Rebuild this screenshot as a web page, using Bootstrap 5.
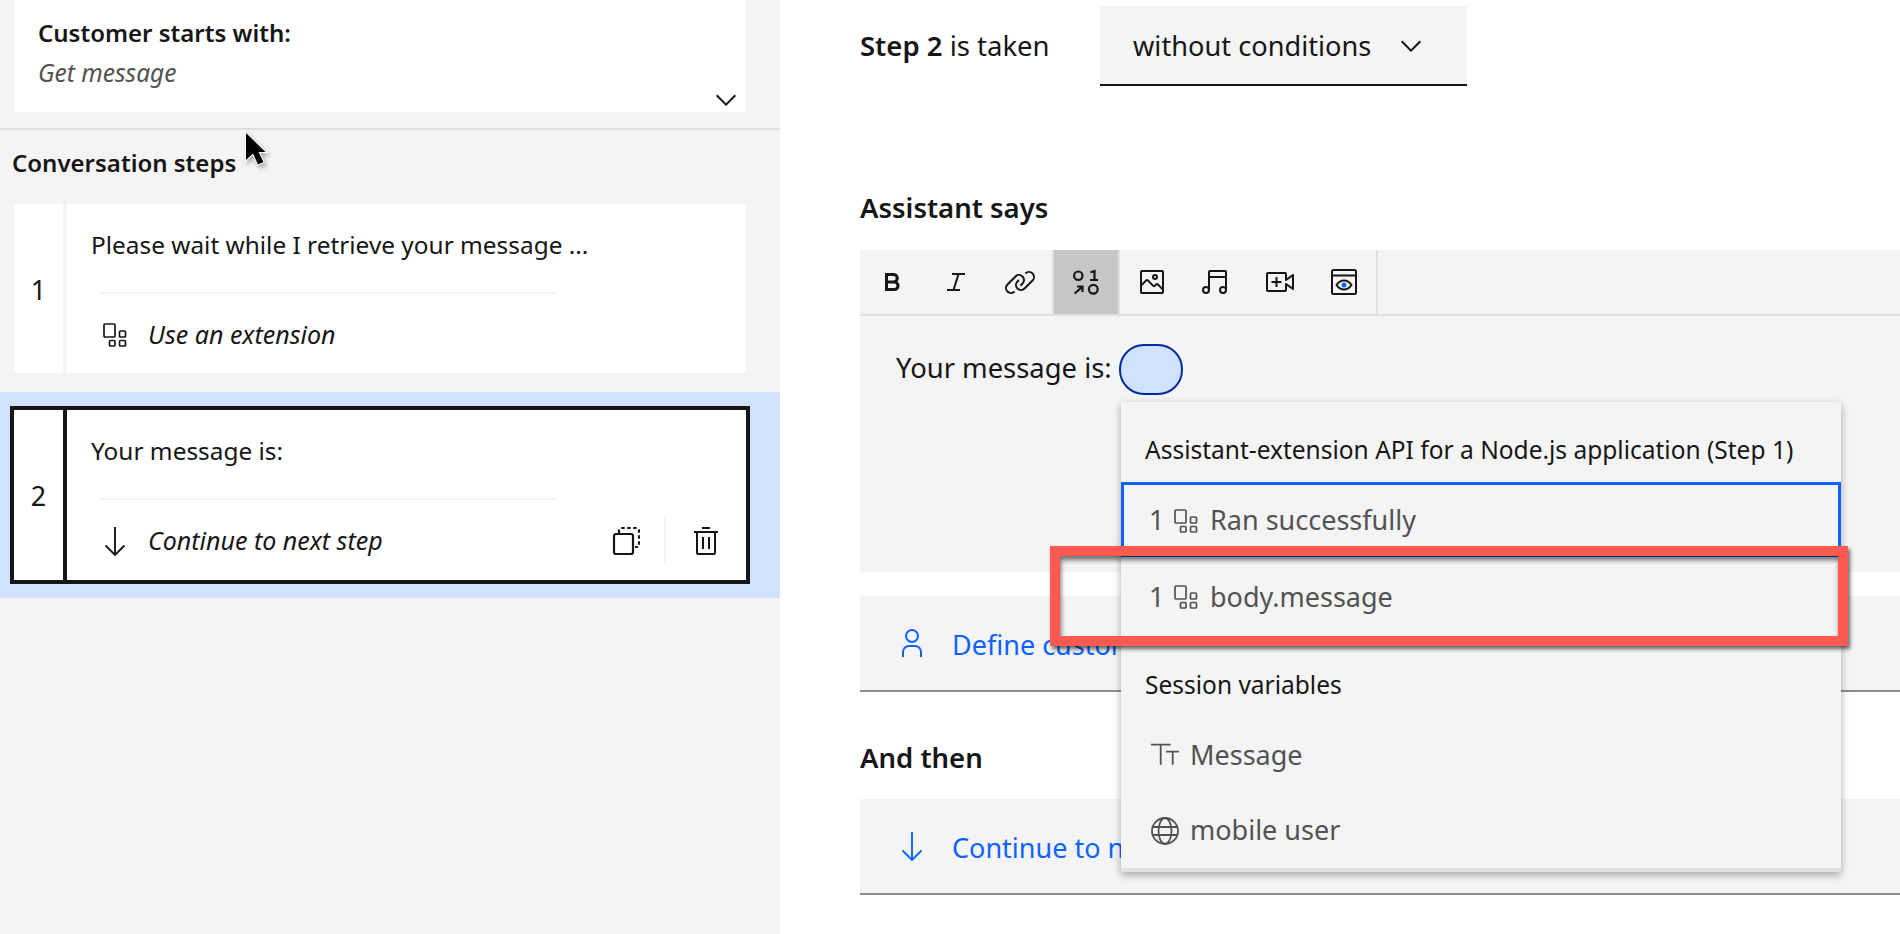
<!DOCTYPE html>
<html lang="en">
<head>
  <meta charset="UTF-8">
  <meta name="viewport" content="width=device-width, initial-scale=1.0">
  <title>Assistant actions</title>
  <link href="https://cdn.jsdelivr.net/npm/bootstrap@5.3.0/dist/css/bootstrap.min.css" rel="stylesheet">
  <style>
    body { font-family: "Noto Sans", "Open Sans", sans-serif; color: #161616; background: #fff; overflow: hidden; }
    svg { display: block; flex: none; }
    .app-shell { width: 1900px; height: 934px; overflow: hidden; }

    /* left pane */
    .side-pane { width: 780px; flex: none; background: #f4f4f4; }
    .start-box { height: 112px; margin: 0 34px 0 14px; background: #fff; padding: 19px 10px 6px 24px; }
    .start-title { font-size: 24px; line-height: 28px; font-weight: 600; }
    .start-sub { font-size: 24.500px; line-height: 28px; margin-top: 12px; color: #525252; font-style: italic; }
    .side-rule { height: 2px; margin-top: 16px; background: #e0e0e0; }
    .side-heading { height: 74px; padding: 19px 0 0 12px; font-size: 24px; line-height: 28px; font-weight: 600; margin: 0; }
    .step-box { height: 169px; margin: 0 34px 0 14px; background: #fff; }
    .step-num { width: 53px; flex: none; border-right: 4px solid #f4f4f4; padding-top: 3px; font-size: 27px; font-weight: 400; }
    .step-body { padding: 27px 24px 0 24px; }
    .step-text { font-size: 24.400px; line-height: 28px; }
    .step-rule { width: 457px; height: 2px; margin: 33px 0 17px 8px; background: #f4f4f4; }
    .step-foot { height: 48px; padding-left: 8px; font-size: 25px; font-style: italic; }
    .foot-icon { width: 32px; margin-right: 17px; }
    .step-selected { height: 206px; margin-top: 19px; padding: 14px 30px 14px 10px; background: #d0e2ff; }
    .step-selected .step-box { margin: 0; height: 178px; width: 740px; border: 4px solid #161616; }
    .step-selected .step-num { border-right-color: #161616; }
    .step-sep { width: 2px; height: 48px; background: #f4f4f4; margin: 0 24px; }

    /* right pane */
    .main-pane { padding-left: 80px; }
    .taken-row { height: 80px; margin-top: 6px; font-size: 27.500px; }
    .taken-label { width: 240px; }
    .cond-select { width: 367px; height: 80px; padding: 2px 0 0 33px; background: #f4f4f4; border-bottom: 2px solid #161616; font-size: 27.200px; }
    .cond-select svg { margin-left: 24px; }
    .block-title { font-size: 27.500px; line-height: 30px; font-weight: 600; margin: 0; }
    .says-title { margin-top: 107px; }
    .tool-strip { height: 66px; margin-top: 27px; background: #f4f4f4; border-bottom: 2px solid #e0e0e0; }
    .tool-btn { width: 64px; height: 64px; color: #161616; }
    .tool-on { background: #c6c6c6; }
    .tool-sep { width: 2px; height: 64px; background: #e0e0e0; }
    .editor-area { height: 256px; padding: 28px 0 0 36px; background: #f4f4f4; font-size: 27.400px; }
    .editor-text { margin-top: 3px; }
    .var-chip { width: 64px; height: 51px; margin-left: 7px; border-radius: 25px; border: 2px solid #002d9c; background: #d0e2ff; }
    .link-row { height: 96px; background: #f4f4f4; border-bottom: 2px solid #8d8d8d; padding-left: 36px; color: #0f62fe; font-size: 27px; }
    .link-row svg { margin-right: 24px; }
    .link-label { padding-top: 4px; white-space: nowrap; }
    .define-row { margin-top: 24px; }
    .then-title { margin-top: 51px; }
    .next-row { margin-top: 26px; }

    /* variable menu, sits over the editor */
    .var-menu { left: 1121px; top: 402px; width: 720px; height: 470px; background: #f4f4f4; box-shadow: 0 3px 8px rgba(0,0,0,.32); border-bottom: 4px solid #e0e0e0; z-index: 5; color: #525252; }
    .menu-head { padding-left: 24px; color: #161616; font-size: 24.500px; }
    .menu-top { height: 80px; padding-top: 16px; }
    .menu-row { padding-left: 28px; font-size: 27px; }
    .menu-row .row-num { width: 25px; }
    .menu-row .row-label { margin-left: 12px; }
    .menu-row .var-label { margin-left: 9px; }
    .menu-focus { height: 75px; border: 3px solid #0f62fe; padding-left: 25px; padding-top: 2px; }
    .red-mark { left: 1050px; top: 546px; width: 798px; height: 100px; border: 10px solid #ff5a4f; box-shadow: 2px 3px 4px rgba(0,0,0,.6), inset 1px 4px 5px rgba(0,0,0,.55); z-index: 6; }
    .mouse-arrow { left: 244px; top: 130px; filter: drop-shadow(2px 3px 2px rgba(0,0,0,.3)); z-index: 9; }
  </style>
</head>
<body>
  <svg width="0" height="0" class="position-absolute">
    <symbol id="ic-ext" viewBox="0 0 24 24"><g fill="none" stroke="currentColor" stroke-width="1.7"><rect x="1" y="1" width="11" height="13" rx="1"/><rect x="16.5" y="8" width="6" height="6" rx="1"/><rect x="6.5" y="17.5" width="5.5" height="5.5" rx="1"/><rect x="16.5" y="17.5" width="6" height="5.5" rx="1"/></g></symbol>
    <symbol id="ic-down" viewBox="0 0 32 32"><path d="M16 2V30M6.5 20.5L16 30l9.500-9.500" fill="none" stroke="currentColor" stroke-width="1.9"/></symbol>
    <symbol id="ic-chev" viewBox="0 0 32 32"><path d="M16 22L6 12l1.4-1.4L16 19.2l8.600-8.600L26 12z" fill="currentColor"/></symbol>
  </svg>

  <div class="app-shell d-flex position-relative">
    <aside class="side-pane">
      <div class="start-box d-flex flex-column">
        <div class="start-title">Customer starts with:</div>
        <div class="start-sub">Get message</div>
        <svg class="mt-auto align-self-end" width="20" height="12" viewBox="6 10 20 12" fill="currentColor"><path d="M16 22L6 12l1.4-1.4L16 19.2l8.600-8.600L26 12z"/></svg>
      </div>
      <div class="side-rule"></div>
      <h2 class="side-heading">Conversation steps</h2>

      <div class="step-box d-flex">
        <div class="step-num d-flex align-items-center justify-content-center">1</div>
        <div class="step-body flex-grow-1">
          <div class="step-text">Please wait while I retrieve your message ...</div>
          <div class="step-rule"></div>
          <div class="step-foot d-flex align-items-center">
            <div class="foot-icon d-flex justify-content-center"><svg width="24" height="24"><use href="#ic-ext"/></svg></div>
            <span>Use an extension</span>
          </div>
        </div>
      </div>

      <div class="step-selected">
        <div class="step-box d-flex">
          <div class="step-num d-flex align-items-center justify-content-center">2</div>
          <div class="step-body flex-grow-1">
            <div class="step-text">Your message is:</div>
            <div class="step-rule"></div>
            <div class="step-foot d-flex align-items-center">
              <div class="foot-icon"><svg width="32" height="32"><use href="#ic-down"/></svg></div>
              <span>Continue to next step</span>
              <svg class="ms-auto" width="32" height="32" viewBox="0 0 32 32" fill="none" stroke="currentColor" stroke-width="2.200"><rect x="6" y="9" width="19" height="20" rx="2"/><path d="M11 8V5a2 2 0 0 1 2-2H29a2 2 0 0 1 2 2V21a2 2 0 0 1-2 1H27" stroke-dasharray="3.500 2.500"/></svg>
              <div class="step-sep"></div>
              <svg width="32" height="32" viewBox="0 0 32 32" fill="currentColor"><path d="M12 12H14V24H12zM18 12H20V24H18z"/><path d="M4 6V8H6V28a2 2 0 002 2H24a2 2 0 002-2V8h2V6zM8 28V8H24V28zM12 2H20V4H12z"/></svg>
            </div>
          </div>
        </div>
      </div>
    </aside>

    <main class="main-pane flex-grow-1">
      <div class="taken-row d-flex align-items-center">
        <div class="taken-label"><span class="fw-semibold">Step 2</span> is taken</div>
        <div class="cond-select d-flex align-items-center">
          <span>without conditions</span>
          <svg width="32" height="32"><use href="#ic-chev"/></svg>
        </div>
      </div>

      <h3 class="block-title says-title">Assistant says</h3>
      <div class="tool-strip d-flex">
        <button type="button" class="btn tool-btn d-flex align-items-center justify-content-center p-0 border-0 rounded-0">
          <svg width="32" height="32" viewBox="0 0 32 32" fill="currentColor"><path d="M18.25 25H9V7H17.5a5.25 5.25 0 014 8.65A5.25 5.25 0 0118.25 25zM12 22h6.23a2.25 2.25 0 100-4.5H12zm0-7.5h5.5a2.25 2.25 0 100-4.5H12z"/></svg>
        </button>
        <button type="button" class="btn tool-btn d-flex align-items-center justify-content-center p-0 border-0 rounded-0">
          <svg width="32" height="32" viewBox="0 0 32 32" fill="currentColor"><path d="M25 9L25 7 12 7 12 9 17.14 9 12.77 23 7 23 7 25 20 25 20 23 14.86 23 19.23 9 25 9z"/></svg>
        </button>
        <button type="button" class="btn tool-btn d-flex align-items-center justify-content-center p-0 border-0 rounded-0">
          <svg width="32" height="32" viewBox="0 0 32 32" fill="currentColor"><path d="M29.25 6.76a6 6 0 00-8.5 0l1.42 1.42a4 4 0 115.67 5.67l-8 8a4 4 0 11-5.67-5.66l1.41-1.42-1.41-1.42-1.42 1.42a6 6 0 000 8.5A6 6 0 0017 25a6 6 0 004.27-1.76l8-8A6 6 0 0029.25 6.76z"/><path d="M4.19 24.82a4 4 0 010-5.67l8-8a4 4 0 015.67 0A3.94 3.94 0 0119 14a4 4 0 01-1.17 2.85L15.71 19l1.42 1.42 2.12-2.12a6 6 0 00-8.5-8.5l-8 8a6 6 0 000 8.5A6 6 0 007 28a6.07 6.07 0 004.28-1.76L9.86 24.82A4 4 0 014.19 24.82z"/></svg>
        </button>
        <div class="tool-sep"></div>
        <button type="button" class="btn tool-btn tool-on d-flex align-items-center justify-content-center p-0 border-0 rounded-0">
          <svg width="32" height="32" viewBox="0 0 32 32" fill="none" stroke="currentColor" stroke-width="2.200"><circle cx="8.300" cy="9.700" r="4.200"/><path d="M20.500 6.500L24.500 5V14M20 14H28"/><circle cx="23.300" cy="23.300" r="4.400"/><path d="M4.700 27.500L12.500 20.500M7 20.500H12.500V26"/></svg>
        </button>
        <div class="tool-sep"></div>
        <button type="button" class="btn tool-btn d-flex align-items-center justify-content-center p-0 border-0 rounded-0">
          <svg width="32" height="32" viewBox="0 0 32 32" fill="currentColor"><path d="M19 14a3 3 0 10-3-3A3 3 0 0019 14zm0-4a1 1 0 11-1 1A1 1 0 0119 10z"/><path d="M26 4H6A2 2 0 004 6V26a2 2 0 002 2H26a2 2 0 002-2V6A2 2 0 0026 4zm0 22H6V20l5-5 5.59 5.59a2 2 0 002.82 0L21 19l5 5zm0-4.83l-3.59-3.59a2 2 0 00-2.82 0L18 19.17l-5.59-5.59a2 2 0 00-2.82 0L6 17.17V6H26z"/></svg>
        </button>
        <button type="button" class="btn tool-btn d-flex align-items-center justify-content-center p-0 border-0 rounded-0">
          <svg width="32" height="32" viewBox="0 0 32 32" fill="currentColor"><path d="M25 4H10A2.002 2.002 0 008 6V20.556A3.955 3.955 0 006 20a4 4 0 104 4V12H25v8.556A3.955 3.955 0 0023 20a4 4 0 104 4V6A2.002 2.002 0 0025 4zM6 26a2 2 0 112-2A2.002 2.002 0 016 26zm17 0a2 2 0 112-2A2.003 2.003 0 0123 26zM10 6H25v4H10z"/></svg>
        </button>
        <button type="button" class="btn tool-btn d-flex align-items-center justify-content-center p-0 border-0 rounded-0">
          <svg width="32" height="32" viewBox="0 0 32 32" fill="currentColor"><path d="M21 26H4a2 2 0 01-2-2V8A2 2 0 014 6H21a2 2 0 012 2v4.06l5.42-3.87A1 1 0 0130 9V23a1 1 0 01-1.58.81L23 19.94V24A2 2 0 0121 26zM4 8V24H21V18a1 1 0 011.58-.81L28 21.06V10.94l-5.42 3.87A1 1 0 0121 14V8z"/><path d="M7.500 15h4v-4h2v4h4v2h-4v4h-2v-4h-4z"/></svg>
        </button>
        <button type="button" class="btn tool-btn d-flex align-items-center justify-content-center p-0 border-0 rounded-0">
          <svg width="32" height="32" viewBox="0 0 32 32" fill="none" stroke="currentColor" stroke-width="2"><rect x="4" y="4" width="24" height="24" rx="1.500"/><path d="M4 9.500H28"/><path d="M8.500 19c2-3 4.500-4.500 7.500-4.500s5.500 1.500 7.500 4.500c-2 3-4.500 4.500-7.500 4.500S10.500 22 8.500 19z"/><circle cx="16" cy="19" r="2.500" fill="#0f62fe" stroke="none"/></svg>
        </button>
        <div class="tool-sep"></div>
      </div>
      <div class="editor-area d-flex align-items-start">
        <span class="editor-text">Your message is:</span>
        <span class="var-chip"></span>
      </div>

      <div class="link-row define-row d-flex align-items-center">
        <svg width="32" height="32" viewBox="0 0 32 32" fill="currentColor"><path d="M16 4a5 5 0 11-5 5 5 5 0 015-5m0-2a7 7 0 107 7A7 7 0 0016 2zM26 30H24V25a5 5 0 00-5-5H13a5 5 0 00-5 5v5H6V25a7 7 0 017-7h6a7 7 0 017 7z"/></svg>
        <span class="link-label">Define customer response</span>
      </div>
      <h3 class="block-title then-title">And then</h3>
      <div class="link-row next-row d-flex align-items-center">
        <svg width="32" height="32"><use href="#ic-down"/></svg>
        <span class="link-label">Continue to next step</span>
      </div>
    </main>

    <div class="var-menu position-absolute">
      <div class="menu-head menu-top d-flex align-items-center">Assistant-extension API for a Node.js application (Step 1)</div>
      <div class="menu-row menu-focus d-flex align-items-center"><span class="row-num">1</span><svg width="24" height="24"><use href="#ic-ext"/></svg><span class="row-label">Ran successfully</span></div>
      <div class="menu-row d-flex align-items-center" style="height:80px"><span class="row-num">1</span><svg width="24" height="24"><use href="#ic-ext"/></svg><span class="row-label">body.message</span></div>
      <div class="menu-head d-flex align-items-center" style="height:96px">Session variables</div>
      <div class="menu-row d-flex align-items-center" style="height:44px">
        <svg width="32" height="32" viewBox="0 0 32 32" fill="none" stroke="currentColor" stroke-width="1.800"><path d="M2 5.700H21.700M11.700 5.700V25.700M17 12.700H30M23.700 12.700V25.700"/></svg>
        <span class="var-label">Message</span>
      </div>
      <div class="menu-row d-flex align-items-center mt-3" style="height:75px">
        <svg width="32" height="32" viewBox="0 0 32 32" fill="none" stroke="currentColor" stroke-width="1.800"><circle cx="16" cy="16" r="13"/><ellipse cx="16" cy="16" rx="6.500" ry="13"/><path d="M4 12H28M4 20H28"/></svg>
        <span class="var-label">mobile user</span>
      </div>
    </div>
    <div class="red-mark position-absolute"></div>

    <svg class="mouse-arrow position-absolute" width="24" height="38" viewBox="0 0 24 38"><path d="M2 3V30L9 23.500L14 34.500L19.500 32L14.500 22H21.500Z" fill="#000" stroke="#fff" stroke-width="2" paint-order="stroke"/></svg>
  </div>

  <script src="https://cdn.jsdelivr.net/npm/bootstrap@5.3.0/dist/js/bootstrap.bundle.min.js"></script>
</body>
</html>
